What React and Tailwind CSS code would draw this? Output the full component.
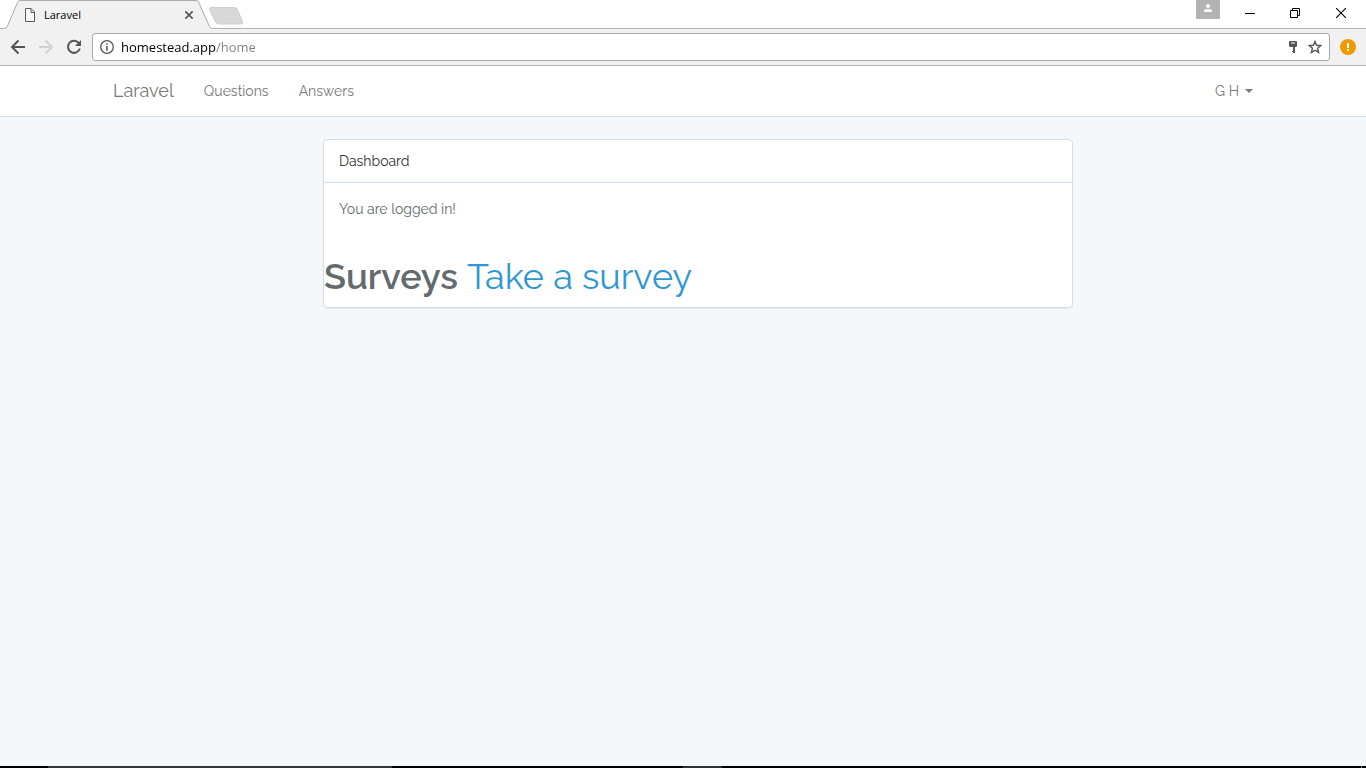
import React from "react";

function BrowserTabs() {
  return (
    <div className="relative flex h-[29px] shrink-0 items-start border-b border-[#b4b4b4] bg-white">
      <div className="relative -mb-px flex h-[29px] w-[212px] shrink-0 items-center pr-[15px] pl-6">
        <svg className="absolute inset-0 h-[29px] w-[212px]" viewBox="0 0 212 29" aria-hidden="true">
          <path d="M4 29V28.5Q6.5 28.5 7.3 26.5L17.5 2.5Q18.3 .5 20 .5H196.500Q198 .5 198.800 2.500L209.500 26.500Q210.500 28.500 212 28.500V29Z" fill="#f1f1f1" />
          <path d="M4 28.500Q6.500 28.500 7.300 26.500L17.500 2.500Q18.300 .5 20 .5H196.500Q198 .5 198.800 2.500L209.500 26.500Q210.500 28.500 212 28.500" fill="none" stroke="#aaa" />
        </svg>
        <svg className="relative h-[14px] w-3" viewBox="0 0 12 14" fill="#fafafa" stroke="#5a5a5a" aria-hidden="true">
          <path d="M1.500 .5H7L10.500 4V13.500H1.500ZM7 .5V4.500H10.500" />
        </svg>
        <span className="relative ml-2 grow font-['Open_Sans',sans-serif] text-[11px] leading-4 text-black">Laravel</span>
        <button aria-label="Close tab" className="relative flex size-4 items-center justify-center">
          <svg className="size-2" viewBox="0 0 8 8" stroke="#5a5a5a" strokeWidth="1.700" aria-hidden="true">
            <path d="M.3 .3L7.700 7.700M7.700 .3L.3 7.700" />
          </svg>
        </button>
      </div>
      <button aria-label="New tab" className="-ml-1 pt-[7px]">
        <svg className="h-[18px] w-9" viewBox="0 0 36 18" aria-hidden="true">
          <path d="M3 .5H26.500Q28.500 .5 29.200 2L34.500 14.500Q35.300 17 33.500 17H11Q8.500 17 7.600 15L1.500 2.500Q.8 .5 3 .5Z" fill="#d8d8d8" stroke="#cfcfcf" />
        </svg>
      </button>
      <div className="ml-auto flex">
        <button aria-label="Profile" className="flex h-[19px] w-6 items-start justify-center bg-[#b3b3b3] pt-1">
          <svg className="h-2 w-2" viewBox="0 0 8 8" fill="#fff" aria-hidden="true">
            <circle cx="4" cy="2" r="2" />
            <path d="M0 8V6.700Q0 5 4 5T8 6.700V8Z" />
          </svg>
        </button>
        <button aria-label="Minimize" className="ml-[7px] flex h-[26px] w-[46px] items-center justify-center">
          <svg className="size-[10px]" viewBox="0 0 10 10" stroke="#000" aria-hidden="true">
            <path d="M0 5.500H10" />
          </svg>
        </button>
        <button aria-label="Restore" className="flex h-[26px] w-11 items-center justify-center">
          <svg className="size-[10px]" viewBox="0 0 10 10" fill="none" stroke="#000" aria-hidden="true">
            <path d="M.5 2.500H7.500V9.500H.5ZM2.500 2.500V.5H9.500V7.500H7.500" />
          </svg>
        </button>
        <button aria-label="Close" className="mr-[1px] flex h-[26px] w-12 items-center justify-center">
          <svg className="size-[10px]" viewBox="0 0 10 10" stroke="#000" strokeWidth="1.100" aria-hidden="true">
            <path d="M0 0L10 10M10 0L0 10" />
          </svg>
        </button>
      </div>
    </div>
  );
}

function Toolbar() {
  return (
    <div className="flex h-[37px] shrink-0 items-center border-b border-[#b4b4b4] bg-[#f1f1f1] pr-[10px] pl-[10px]">
      <button aria-label="Back" className="mr-3 size-4">
        <svg className="size-4" viewBox="0 0 16 16" fill="none" stroke="#555" strokeWidth="2" aria-hidden="true">
          <path d="M8.500 1.500L2 8L8.500 14.500M2 8H15" />
        </svg>
      </button>
      <button aria-label="Forward" className="mr-3 size-4">
        <svg className="size-4" viewBox="0 0 16 16" fill="none" stroke="#d2d2d2" strokeWidth="2" aria-hidden="true">
          <path d="M7.500 1.500L14 8L7.500 14.500M14 8H1" />
        </svg>
      </button>
      <button aria-label="Reload" className="mr-[10px] size-4">
        <svg className="size-4" viewBox="0 0 16 16" fill="none" stroke="#555" strokeWidth="2" aria-hidden="true">
          <path d="M12.800 4.200A6 6 0 1 0 13.800 9.500" />
          <path d="M15 1V7H9Z" fill="#555" stroke="none" />
        </svg>
      </button>
      <div className="flex h-7 grow items-center rounded-[3px] border border-[#a9a9a9] bg-white pr-[7px] pl-[7px]">
        <svg className="size-[14px]" viewBox="0 0 14 14" fill="none" stroke="#555" aria-hidden="true">
          <circle cx="7" cy="7" r="6.300" strokeWidth="1.300" />
          <path d="M7 6V10.800M7 3.200V4.800" strokeWidth="1.600" />
        </svg>
        <input
          aria-label="Address"
          type="text"
          defaultValue="homestead.app/home"
          className="ml-[7px] min-w-0 grow bg-[linear-gradient(to_right,#000_95px,#808080_95px)] bg-clip-text font-['Open_Sans',sans-serif] text-[13px] leading-5 text-transparent outline-none"
        />
        <svg className="mr-[11px] h-3 w-2" viewBox="0 0 8 12" fill="#555" aria-hidden="true">
          <path fillRule="evenodd" d="M1 0H7Q8 0 8 1V5L7 6H6V12H4V11H3V10H4V6H1L0 5V1Q0 0 1 0ZM2 1.500V2.500H6V1.500Z" />
        </svg>
        <button aria-label="Bookmark this page" className="size-[14px]">
          <svg className="size-[14px]" viewBox="0 0 14 14" fill="none" stroke="#555" strokeWidth="1.400" aria-hidden="true">
            <path d="M7 1.500L8.600 5.300L12.800 5.600L9.600 8.300L10.600 12.400L7 10.200L3.400 12.400L4.400 8.300L1.200 5.600L5.400 5.300Z" />
          </svg>
        </button>
      </div>
      <button aria-label="Browser menu" className="ml-[10px] size-4">
        <svg className="size-4" viewBox="0 0 16 16" aria-hidden="true">
          <circle cx="8" cy="8" r="8" fill="#f29900" />
          <path d="M7 4H9V9H7ZM7 10H9V12H7Z" fill="#fff" />
        </svg>
      </button>
    </div>
  );
}

function SiteNav() {
  return (
    <nav className="border-b border-[#d3e0e9] bg-white text-[#777]">
      <div className="mx-auto flex h-[50px] max-w-[1170px] items-center px-[15px]">
        <a href="#home" className="mr-[30px] text-[18px]">Laravel</a>
        <a href="#questions" className="mr-[30px]">Questions</a>
        <a href="#answers">Answers</a>
        <button className="ml-auto flex items-center">
          G H
          <svg className="ml-[6px] h-1 w-2" viewBox="0 0 8 4" fill="#777" aria-hidden="true">
            <path d="M0 0H8L4 4Z" />
          </svg>
        </button>
      </div>
    </nav>
  );
}

function Dashboard() {
  return (
    <main className="mx-auto w-full max-w-[1170px] pt-[22px] pr-[195px] pl-[225px]">
      <section className="rounded-[4px] border border-[#d3e0e9] bg-white shadow-[0_1px_1px_rgba(0,0,0,0.05)]">
        <header className="border-b border-[#d3e0e9] px-[15px] py-[10px] text-[#333]">Dashboard</header>
        <p className="p-[15px]">You are logged in!</p>
        <h1 className="mt-[22px] mb-[11px] text-[36px] leading-[39px] font-semibold">
          Surveys <a href="#survey" className="font-normal text-[#3097d1]">Take a survey</a>
        </h1>
      </section>
    </main>
  );
}

function Taskbar() {
  return (
    <footer className="flex h-[2px] shrink-0 bg-black">
      <div className="ml-12 h-full w-[344px] bg-[#36363a]" />
      <div className="ml-[291px] h-full w-[39px] bg-[#303034]" />
      <div className="mr-1 ml-auto h-full w-px bg-[#777]" />
    </footer>
  );
}

export default function App() {
  return (
    <div className="flex min-h-screen flex-col bg-[#f4f8fb]">
      <BrowserTabs />
      <Toolbar />
      <div className="grow font-['Raleway','Inter',sans-serif] text-[14px] leading-[22px] font-normal text-[#636b6f]">
        <SiteNav />
        <Dashboard />
      </div>
      <Taskbar />
    </div>
  );
}
